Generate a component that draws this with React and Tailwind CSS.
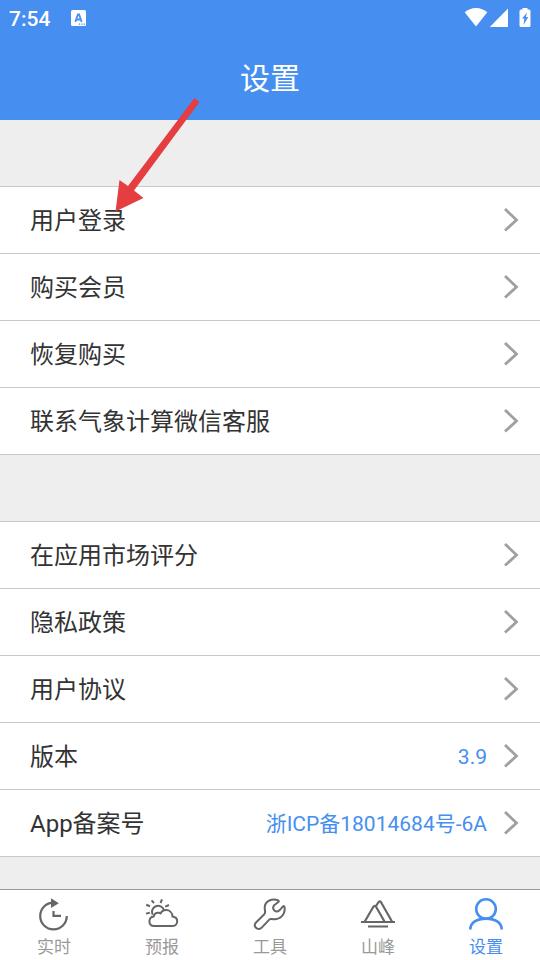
// src/App.jsx
const account = [
  { label: "用户登录" },
  { label: "购买会员" },
  { label: "恢复购买" },
  { label: "联系气象计算微信客服" },
];

const about = [
  { label: "在应用市场评分" },
  { label: "隐私政策" },
  { label: "用户协议" },
  { label: "版本", value: "3.9" },
  { label: "App备案号", value: "浙ICP备18014684号-6A" },
];

const iconProps = {
  className: "w-9 h-9",
  viewBox: "0 0 36 36",
  fill: "none",
  stroke: "currentColor",
  strokeWidth: 2,
  "aria-hidden": true,
};

function ClockIcon() {
  return (
    <svg {...iconProps} strokeWidth="2.2">
      <path d="M17.5 6.7A13.3 13.3 0 1 0 30.8 20" />
      <path d="M15 2.2L22.8 7.2 15 12z" fill="currentColor" stroke="none" />
      <path d="M17.5 15v4.800H25" />
    </svg>
  );
}

function ForecastIcon() {
  return (
    <svg {...iconProps}>
      <path d="M8.600 18.800A6.200 6.200 0 1 1 20 14" />
      <path d="M18 3.300L16.500 7M7.600 4.300L10 7.200M2.200 8.700L6 10.200M2 17.600l3.800-.9M25 9l-3.800 1.700" />
      <path
        d="M9.300 30c-2.700 0-4.100-2.500-3.900-5 .2-2.500 2-4.200 4.300-4.500.6-2.700 2.500-4.100 4.900-3.800.9.100 1.500.4 2 .8 1-2.200 3-3.400 5.400-3.400 3.600 0 6.300 2.500 6.500 6.500 3.200.5 4.700 2.400 4.700 4.700 0 2.600-1.700 4.700-4.300 4.700z"
        strokeLinejoin="round"
      />
    </svg>
  );
}

function WrenchIcon() {
  return (
    <svg {...iconProps} strokeLinejoin="round">
      <path d="M26.300 4.500C20.500 1.800 12.800 4.800 12.700 11.500c0 1.500.2 2.600.4 3.800.1 1.400-.1 2.300-.8 3L4 26.500c-1.700 1.800-1.300 4 0 5.300 1.500 1.600 4 1.600 5.700-.2l7.600-8c.6-.6 1.500-.8 2.500-.6C28 24.500 33.800 18.500 32.500 11q-.4-1.500-1.500-.6l-3.500 3.900q-2.600 2.400-5.200.1-2.300-2.500-.1-5.200l4.200-3.200q.9-.9-.1-1.500z" />
    </svg>
  );
}

function PeakIcon() {
  return (
    <svg {...iconProps} strokeWidth="2.2">
      <path d="M1 26h34M8 30.500h20" />
      <path d="M4.800 25.500L13.200 11q1.500-2.200 3 0l8.300 14.500M16 10l2.700-4q1.200-1.300 2.200 0L32 25.500" />
    </svg>
  );
}

function UserIcon() {
  return (
    <svg {...iconProps} strokeWidth="2.6">
      <circle cx="18" cy="13" r="9.800" />
      <path d="M2.300 33.500C2.300 26.500 9 22.600 18 22.600s15.700 3.900 15.700 10.900" />
    </svg>
  );
}

const tabs = [
  { label: "实时", Icon: ClockIcon },
  { label: "预报", Icon: ForecastIcon },
  { label: "工具", Icon: WrenchIcon },
  { label: "山峰", Icon: PeakIcon },
  { label: "设置", Icon: UserIcon, active: true },
];

function StatusBar() {
  return (
    <div className="flex h-9 items-center px-[9px] text-white">
      <span className="pt-0.5 text-[21px] font-medium leading-9">7:54</span>
      <svg className="ml-5 h-4 w-4" viewBox="0 0 16 16" aria-hidden="true">
        <rect x="1" y="0" width="15" height="16" rx="1.5" fill="#fff" />
        <path d="M5.300 12L7.900 4.500h1.200l2.600 7.500M6.300 9.500h4.400" fill="none" stroke="#468ff0" strokeWidth="1.800" />
        <path d="M8.800 14.200h1.300M11.200 14.200h1.300M13.600 14.200h1.300" stroke="#468ff0" strokeWidth="1.200" />
      </svg>
      <svg className="ml-auto h-5 w-6" viewBox="0 0 24 20" fill="#fff" aria-hidden="true">
        <path d="M12 18.500L.7 4.300C3.700 1.600 7.700 0 12 0s8.300 1.600 11.300 4.300z" />
      </svg>
      <svg className="ml-px h-5 w-5" viewBox="0 0 20 20" fill="#fff" aria-hidden="true">
        <path d="M19 .5V19H.8z" />
      </svg>
      <svg className="ml-2.5 h-5 w-3" viewBox="0 0 12 20" aria-hidden="true">
        <path d="M3.500 0h5v1.500H10q1.500 0 1.500 1.500v14.500Q11.500 19 10 19H2q-1.500 0-1.500-1.500V3Q.5 1.500 2 1.500h1.500z" fill="#fff" />
        <path d="M8 4.500L3 10.500h2.300L4.500 17 9.200 9H6.800z" fill="#468ff0" />
      </svg>
    </div>
  );
}

function Row({ label, value }) {
  return (
    <li>
      <button type="button" className="flex h-[66px] w-full items-center pl-[30px] pr-[21px] text-left">
        <span className="pt-0.5 text-2xl text-[#333333]">{label}</span>
        <span className="ml-auto pt-1 text-[21px] text-[#468ff0]">{value}</span>
        <svg className="ml-4 h-6 w-4" viewBox="0 0 16 24" fill="none" stroke="#a0a0a0" strokeWidth="2.8" aria-hidden="true">
          <path d="M2 1L13.500 12 2 22.500" />
        </svg>
      </button>
    </li>
  );
}

function Group({ items }) {
  return (
    <ul className="mt-[66px] divide-y divide-[#c8c8c8] border-y border-[#c8c8c8] bg-white">
      {items.map((item) => (
        <Row key={item.label} {...item} />
      ))}
    </ul>
  );
}

export default function App() {
  return (
    <div className="relative flex min-h-screen flex-col bg-[#eeeeee] font-['Roboto','Noto_Sans_CJK_SC',sans-serif]">
      <header className="bg-[#468ff0]">
        <StatusBar />
        <h1 className="h-[84px] pt-px text-center text-[30px] leading-[84px] text-white">设置</h1>
      </header>

      <main className="flow-root flex-1">
        <Group items={account} />
        <Group items={about} />
      </main>

      <nav className="grid h-[71px] grid-cols-5 border-t border-[#999999] bg-white">
        {tabs.map(({ label, Icon, active }) => (
          <button
            key={label}
            type="button"
            className={`flex flex-col items-center pt-1.5 ${active ? "text-[#468ff0]" : "text-[#666666]"}`}
          >
            <Icon />
            <span className={`pt-px text-[17px] leading-7 ${active ? "" : "text-[#999999]"}`}>{label}</span>
          </button>
        ))}
      </nav>

      {/* Pointer to the login row */}
      <svg className="pointer-events-none absolute left-[114px] top-[97px] h-[116px] w-[88px]" viewBox="0 0 88 116" aria-hidden="true">
        <path d="M80.500 1L85.500 5 20 93.500 29.500 101 1.500 114.500 5.500 83 14 89z" fill="#e53e40" />
      </svg>
    </div>
  );
}
